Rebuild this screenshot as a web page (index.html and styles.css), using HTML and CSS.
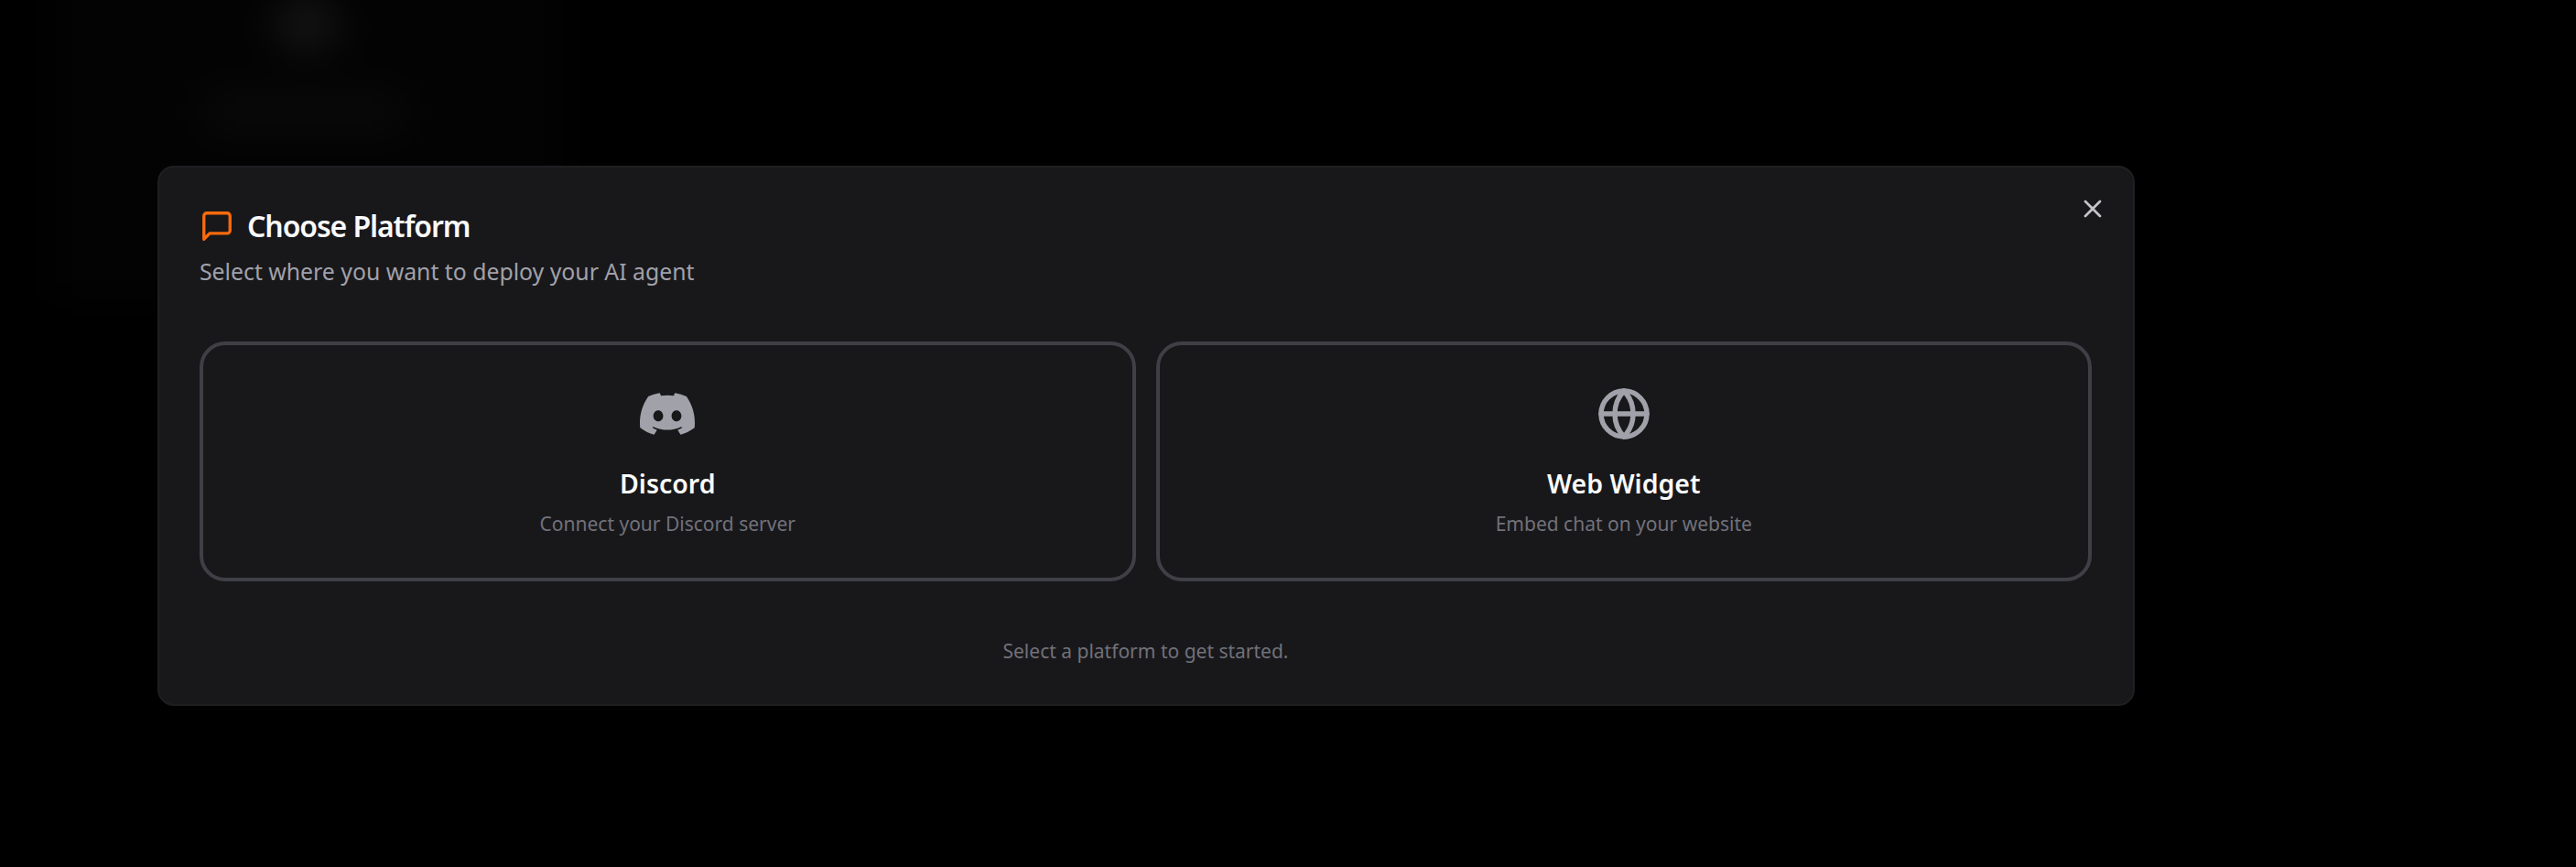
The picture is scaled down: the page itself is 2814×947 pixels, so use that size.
FILE: index.html
```html
<!DOCTYPE html>
<html lang="en">
<head>
    <meta charset="UTF-8">
    <meta name="viewport" content="width=device-width, initial-scale=1.0">
    <title>Choose Platform</title>
    <link rel="stylesheet" href="styles.css">
</head>
<body>
    <div class="backdrop">
        <div class="ghost-panel"></div>
        <div class="ghost-avatar"></div>
        <div class="ghost-label"></div>
    </div>
    <div class="modal">
        <button class="close-btn" aria-label="Close">
            <svg viewBox="0 0 24 24" width="32" height="32" fill="none" stroke="currentColor" stroke-width="2" stroke-linecap="round" stroke-linejoin="round">
                <path d="M18 6 6 18"/>
                <path d="m6 6 12 12"/>
            </svg>
        </button>
        <div class="modal-title">
            <svg viewBox="0 0 24 24" width="38" height="38" fill="none" stroke="currentColor" stroke-width="2.1" stroke-linecap="round" stroke-linejoin="round">
                <path d="M21 15a2 2 0 0 1-2 2H7l-4 4V5a2 2 0 0 1 2-2h14a2 2 0 0 1 2 2z"/>
            </svg>
            <h2>Choose Platform</h2>
        </div>
        <p class="modal-sub">Select where you want to deploy your AI agent</p>
        <div class="platforms">
            <div class="platform">
                <svg class="platform-icon" viewBox="0 0 24 24" width="60" height="60" fill="currentColor">
                    <path d="M20.317 4.3698a19.7913 19.7913 0 00-4.8851-1.5152.0741.0741 0 00-.0785.0371c-.211.3753-.4447.8648-.6083 1.2495-1.8447-.2762-3.68-.2762-5.4868 0-.1636-.3933-.4058-.8742-.6177-1.2495a.077.077 0 00-.0785-.037 19.7363 19.7363 0 00-4.8852 1.515.0699.0699 0 00-.0321.0277C.5334 9.0458-.319 13.5799.0992 18.0578a.0824.0824 0 00.0312.0561c2.0528 1.5076 4.0413 2.4228 5.9929 3.0294a.0777.0777 0 00.0842-.0276c.4616-.6304.8731-1.2952 1.226-1.9942a.076.076 0 00-.0416-.1057c-.6528-.2476-1.2743-.5495-1.8722-.8923a.077.077 0 01-.0076-.1277c.1258-.0943.2517-.1923.3718-.2914a.0743.0743 0 01.0776-.0105c3.9278 1.7933 8.18 1.7933 12.0614 0a.0739.0739 0 01.0785.0095c.1202.099.246.1981.3728.2924a.077.077 0 01-.0066.1276 12.2986 12.2986 0 01-1.873.8914.0766.0766 0 00-.0407.1067c.3604.698.7719 1.3628 1.225 1.9932a.076.076 0 00.0842.0286c1.961-.6067 3.9495-1.5219 6.0023-3.0294a.077.077 0 00.0313-.0552c.5004-5.177-.8382-9.6739-3.5485-13.6604a.061.061 0 00-.0312-.0286zM8.02 15.3312c-1.1825 0-2.1569-1.0857-2.1569-2.419 0-1.3332.9555-2.4189 2.157-2.4189 1.2108 0 2.1757 1.0952 2.1568 2.419 0 1.3332-.9555 2.4189-2.1569 2.4189zm7.9748 0c-1.1825 0-2.1569-1.0857-2.1569-2.419 0-1.3332.9554-2.4189 2.1569-2.4189 1.2108 0 2.1757 1.0952 2.1568 2.419 0 1.3332-.946 2.4189-2.1568 2.4189z"/>
                </svg>
                <h3>Discord</h3>
                <p>Connect your Discord server</p>
            </div>
            <div class="platform">
                <svg class="platform-icon" viewBox="0 0 24 24" width="60" height="60" fill="none" stroke="currentColor" stroke-width="2.2" stroke-linecap="round" stroke-linejoin="round">
                    <circle cx="12" cy="12" r="10"/>
                    <path d="M12 2a14.5 14.5 0 0 0 0 20 14.5 14.5 0 0 0 0-20"/>
                    <path d="M2 12h20"/>
                </svg>
                <h3>Web Widget</h3>
                <p>Embed chat on your website</p>
            </div>
        </div>
        <p class="modal-hint">Select a platform to get started.</p>
    </div>
</body>
</html>
```

FILE: styles.css
```css
* {
    box-sizing: border-box;
}
body {
    font-family: 'Noto Sans', 'Open Sans', sans-serif;
    background-color: #000;
    margin: 0;
    height: 947px;
    overflow: hidden;
    padding: 181px 0 0 172px;
    color: #fafafa;
}
/* blurred page behind the dialog */
.backdrop {
    position: absolute;
    top: 0;
    left: 0;
    width: 700px;
    height: 350px;
    filter: blur(22px);
}
.ghost-panel {
    position: absolute;
    top: -20px;
    left: 60px;
    width: 555px;
    height: 345px;
    background-color: #030303;
}
.ghost-avatar {
    position: absolute;
    top: -4px;
    left: 300px;
    width: 70px;
    height: 60px;
    border-radius: 50%;
    background-color: #151516;
}
.ghost-label {
    position: absolute;
    top: 106px;
    left: 225px;
    width: 215px;
    height: 32px;
    background-color: #0b0b0b;
}
.modal {
    position: relative;
    width: 2160px;
    height: 590px;
    padding: 44px 45px 0 44px;
    background-color: #18181b;
    border: 2px solid #1f1f22;
    border-radius: 18px;
}
.close-btn {
    position: absolute;
    top: 29px;
    right: 28px;
    padding: 0;
    border: 0;
    background: none;
    color: #c4c4c8;
    display: flex;
}
.modal-title {
    display: flex;
    align-items: center;
    gap: 14px;
    color: #f96a0c;
}
.modal-title h2 {
    margin: 0;
    font-size: 32px;
    line-height: 40px;
    font-weight: 600;
    letter-spacing: -1.1px;
    color: #fafafa;
}
.modal-sub {
    margin: 11px 0 0;
    font-size: 24.8px;
    line-height: 36px;
    color: #a1a1aa;
}
.platforms {
    display: grid;
    grid-template-columns: 1fr 1fr;
    gap: 22px;
    margin-top: 59px;
}
.platform {
    height: 262px;
    padding: 45px 0 0;
    border: 4px solid #3f3f46;
    border-radius: 28px;
    text-align: center;
}
.platform-icon {
    display: block;
    margin: 0 auto;
    color: #a1a1aa;
}
.platform h3 {
    margin: 26px 0 0;
    font-size: 28.5px;
    line-height: 40px;
    font-weight: 600;
    color: #fafafa;
}
.platform p {
    margin: 8px 0 0;
    font-size: 21px;
    line-height: 32px;
    color: #71717a;
}
.modal-hint {
    margin: 60px 0 0;
    font-size: 21px;
    line-height: 32px;
    text-align: center;
    color: #71717a;
}
```
